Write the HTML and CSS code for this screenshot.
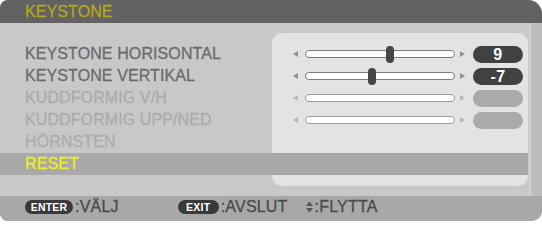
FILE: index.html
```html
<!DOCTYPE html>
<html>
<head>
<meta charset="utf-8">
<link rel="stylesheet" href="styles.css">
</head>
<body>
<div class="frame">
  <div class="titlebar">KEYSTONE</div>
  <div class="menu">
    <div class="panel"></div>
    <div class="highlight"></div>

    <div class="label r1">KEYSTONE HORISONTAL</div>
    <div class="ctrl r1">
      <span class="arrow left"></span>
      <span class="track"><span class="thumb" style="left:84px"></span></span>
      <span class="arrow right"></span>
      <span class="value">9</span>
    </div>

    <div class="label r2">KEYSTONE VERTIKAL</div>
    <div class="ctrl r2">
      <span class="arrow left"></span>
      <span class="track"><span class="thumb" style="left:66px"></span></span>
      <span class="arrow right"></span>
      <span class="value">-7</span>
    </div>

    <div class="label r3 off">KUDDFORMIG V/H</div>
    <div class="ctrl r3 off">
      <span class="arrow left"></span>
      <span class="track"></span>
      <span class="arrow right"></span>
      <span class="value"></span>
    </div>

    <div class="label r4 off">KUDDFORMIG UPP/NED</div>
    <div class="ctrl r4 off">
      <span class="arrow left"></span>
      <span class="track"></span>
      <span class="arrow right"></span>
      <span class="value"></span>
    </div>

    <div class="label r5 off">HÖRNSTEN</div>
    <div class="label r6 sel">RESET</div>
  </div>
  <div class="footer">
    <span class="key enter">ENTER</span><span class="ftext">:VÄLJ</span>
    <span class="key exit">EXIT</span><span class="ftext">:AVSLUT</span>
    <svg class="updown" width="7" height="12" viewBox="0 0 7 12"><polygon points="0,5 3.5,0.5 7,5" fill="#555"/><polygon points="0,7 7,7 3.5,11.5" fill="#555"/></svg><span class="ftext">:FLYTTA</span>
  </div>
</div>
</body>
</html>
```

FILE: styles.css
```css
html, body {
  margin: 0;
  padding: 0;
  background: #ffffff;
}
body {
  width: 542px;
  height: 221px;
  overflow: hidden;
  font-family: "Liberation Sans", Arial, sans-serif;
}
.frame {
  width: 542px;
  height: 221px;
  border-radius: 8px 14px 10px 8px;
  overflow: hidden;
  background: #c8c8c8;
  display: flex;
  flex-direction: column;
}
.titlebar {
  height: 22px;
  padding: 1px 0 0 25px;
  line-height: 22px;
  background: #626262;
  color: #b4a61a;
  font-size: 16px;
  letter-spacing: 0.1px;
  -webkit-text-stroke: 0.3px #b4a61a;
}
.menu {
  display: grid;
  grid-template-columns: 272px 256px 14px;
  grid-template-rows: 10px 10px repeat(6, 22px) 11px 10px;
  background: linear-gradient(to right, #c8c8c8 0, #c8c8c8 529px, #d2d2d2 529px, #d2d2d2 531px, #bdbdbd 531px);
}
.panel {
  grid-column: 2;
  grid-row: 2 / 10;
  background: #e3e3e3;
  border-radius: 10px;
}
.highlight {
  grid-column: 1 / 3;
  grid-row: 8;
  background: #a9a9a9;
}
.label {
  grid-column: 1;
  padding-left: 25px;
  line-height: 22px;
  font-size: 16px;
  letter-spacing: 0.1px;
  color: #6b6b6b;
  -webkit-text-stroke: 0.3px #6b6b6b;
  white-space: nowrap;
}
.label.off {
  color: #acacac;
  -webkit-text-stroke: 0.3px #acacac;
}
.label.sel {
  color: #eeee22;
  -webkit-text-stroke: 0.3px #eeee22;
}
.r1 { grid-row: 3; }
.r2 { grid-row: 4; }
.r3 { grid-row: 5; }
.r4 { grid-row: 6; }
.r5 { grid-row: 7; }
.r6 { grid-row: 8; }
.ctrl {
  grid-column: 2;
  display: flex;
  align-items: center;
  padding-left: 21px;
}
.arrow {
  width: 0;
  height: 0;
  border-top: 3.5px solid transparent;
  border-bottom: 3.5px solid transparent;
}
.arrow.left {
  border-right: 5px solid #929292;
  margin-right: 7px;
}
.arrow.right {
  border-left: 5px solid #929292;
  margin-left: 5px;
  margin-right: 8px;
}
.off .arrow.left { border-right-color: #b8b8b8; }
.off .arrow.right { border-left-color: #b8b8b8; }
.track {
  position: relative;
  box-sizing: border-box;
  width: 150px;
  height: 8px;
  background: #ffffff;
  border: 1px solid #7c7c7c;
  border-radius: 4px;
}
.off .track {
  border-color: #9c9c9c;
}
.thumb {
  position: absolute;
  top: -5px;
  width: 8px;
  height: 17px;
  margin-left: -4px;
  background: #454545;
  border-radius: 4px;
}
.value {
  width: 50px;
  height: 17px;
  border-radius: 8.5px;
  background: #414141;
  color: #ffffff;
  font-size: 16px;
  font-weight: bold;
  line-height: 17px;
  text-align: center;
  letter-spacing: 0.5px;
}
.off .value {
  background: #aaaaaa;
}
.footer {
  height: 21px;
  padding-bottom: 4px;
  background: #a8a8a8;
  display: flex;
  align-items: center;
  padding-left: 25px;
  line-height: 21px;
}
.key {
  height: 14px;
  border-radius: 7px;
  background: #393939;
  color: #ffffff;
  font-size: 10.5px;
  font-weight: bold;
  line-height: 14px;
  text-align: center;
  letter-spacing: 0.2px;
}
.key.enter { width: 48px; }
.key.exit { width: 41px; margin-left: 59px; }
.ftext {
  font-size: 16px;
  letter-spacing: 0.2px;
  color: #4b4b4b;
  -webkit-text-stroke: 0.3px #4b4b4b;
  margin-left: 2px;
}
.updown {
  margin-left: 18px;
  margin-right: 0;
}
```
